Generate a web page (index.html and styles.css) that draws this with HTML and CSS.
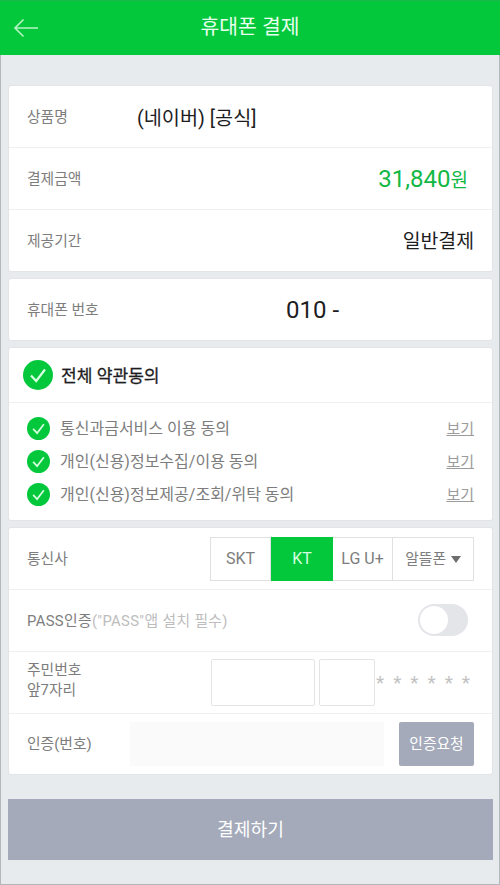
FILE: index.html
```html
<!DOCTYPE html>
<html lang="ko">
  <head>
    <meta charset="UTF-8">
    <meta name="viewport" content="width=device-width, initial-scale=1.0">
    <title>휴대폰 결제</title>
    <link rel="stylesheet" href="styles.css">
  </head>
  <body>
    <header class="header">
      <a href="#" class="back" aria-label="뒤로">
        <svg width="26" height="20" viewBox="0 0 26 20"><path d="M25 10H2M10.5 1.5L2 10l8.5 8.5"/></svg>
      </a>
      <h1>휴대폰 결제</h1>
    </header>

    <main class="content">
      <section class="card">
        <div class="row">
          <span class="label">상품명</span>
          <span class="product">(네이버) [공식]</span>
        </div>
        <div class="row">
          <span class="label">결제금액</span>
          <span class="price">31,840<small>원</small></span>
        </div>
        <div class="row">
          <span class="label">제공기간</span>
          <span class="period">일반결제</span>
        </div>
      </section>

      <section class="card">
        <div class="row">
          <span class="label">휴대폰 번호</span>
          <span class="phone">010 -</span>
        </div>
      </section>

      <section class="card">
        <div class="agree-all">
          <svg class="check" width="30" height="30" viewBox="0 0 30 30"><circle cx="15" cy="15" r="15"/><path d="M8 15.5l5.2 5.5L22 9.5"/></svg>
          <strong>전체 약관동의</strong>
        </div>
        <ul class="agree-list">
          <li>
            <svg class="check" width="23" height="23" viewBox="0 0 30 30"><circle cx="15" cy="15" r="15"/><path d="M8 15.5l5.2 5.5L22 9.5"/></svg>
            <span>통신과금서비스 이용 동의</span>
            <a href="#">보기</a>
          </li>
          <li>
            <svg class="check" width="23" height="23" viewBox="0 0 30 30"><circle cx="15" cy="15" r="15"/><path d="M8 15.5l5.2 5.5L22 9.5"/></svg>
            <span>개인(신용)정보수집/이용 동의</span>
            <a href="#">보기</a>
          </li>
          <li>
            <svg class="check" width="23" height="23" viewBox="0 0 30 30"><circle cx="15" cy="15" r="15"/><path d="M8 15.5l5.2 5.5L22 9.5"/></svg>
            <span>개인(신용)정보제공/조회/위탁 동의</span>
            <a href="#">보기</a>
          </li>
        </ul>
      </section>

      <section class="card">
        <div class="row">
          <span class="label">통신사</span>
          <div class="carriers">
            <button type="button">SKT</button>
            <button type="button" class="active">KT</button>
            <button type="button">LG U+</button>
            <button type="button" class="mvno">알뜰폰
              <svg width="10" height="7" viewBox="0 0 10 7"><path d="M0 0h10L5 7z"/></svg>
            </button>
          </div>
        </div>
        <div class="row">
          <span class="label pass">PASS인증<em>("PASS"앱 설치 필수)</em></span>
          <span class="toggle"></span>
        </div>
        <div class="row">
          <label class="label birth-label" for="birth">주민번호<br>앞7자리</label>
          <div class="resident">
            <input type="text" id="birth" class="birth">
            <input type="text" class="gender" aria-label="뒷자리">
            <span class="stars"><i>*</i><i>*</i><i>*</i><i>*</i><i>*</i><i>*</i></span>
          </div>
        </div>
        <div class="row">
          <label class="label" for="code">인증(번호)</label>
          <input type="text" id="code" class="code">
          <button type="button" class="request">인증요청</button>
        </div>
      </section>

      <button type="button" class="pay">결제하기</button>
    </main>
  </body>
</html>
```
FILE: styles.css
```css
* {
  box-sizing: border-box;
}

body {
  margin: 0;
  height: 885px;
  display: flex;
  flex-direction: column;
  background-color: #e8ebee;
  font-family: Roboto, "Noto Sans CJK KR", sans-serif;
  font-size: 14.8px;
  color: #1d1d1f;
}

button,
input {
  font: inherit;
  margin: 0;
  padding: 0;
  border: 0;
  border-radius: 0;
}

.header {
  position: relative;
  height: 55px;
  background-color: #03c83c;
  border-top: 1px solid #1bb94b;
}

.header h1 {
  margin: 0;
  color: #e9ffee;
  font-size: 20.4px;
  font-weight: 400;
  line-height: 52px;
  text-align: center;
}

.back {
  position: absolute;
  left: 13px;
  top: 17px;
}

.back svg {
  display: block;
  fill: none;
  stroke: #b5f5c2;
  stroke-width: 1.6;
}

.content {
  flex: 1;
  display: flex;
  flex-direction: column;
  gap: 8px;
  padding: 31px 7px 0 8px;
  border: 1px solid #b4b7bb;
  border-top: 0;
}

.card {
  background-color: #fff;
  border-radius: 2px;
  box-shadow: 0 0 1px 1px #e1e4e7;
}

.row {
  display: flex;
  align-items: center;
  justify-content: space-between;
  height: 62px;
  padding: 0 18px;
  border-top: 1px solid #eeeff0;
}

.row:first-child {
  height: 61px;
  border-top: 0;
}

.row:nth-child(4) {
  height: 61px;
}

.label {
  color: #7d7d7d;
  line-height: 20px;
}

.label em {
  color: #bdbdbd;
  font-style: normal;
}

.pass {
  letter-spacing: 0.35px;
}

.birth-label {
  padding-bottom: 5px;
}

.product {
  width: 337px;
  font-size: 19.7px;
}

.price {
  padding-right: 6px;
  color: #12b845;
  font-size: 24px;
}

.price small {
  font-size: 19px;
}

.period {
  padding-bottom: 2px;
  font-size: 19.4px;
}

.phone {
  width: 188px;
  font-size: 24px;
}

.check {
  flex: none;
  fill: #03c83c;
}

.check path {
  fill: none;
  stroke: #d8ffe0;
  stroke-width: 2.2;
}

.agree-all {
  display: flex;
  align-items: center;
  gap: 8px;
  height: 54px;
  padding-left: 14px;
}

.agree-all strong {
  padding-bottom: 2px;
  font-size: 17.1px;
  font-weight: 400;
  -webkit-text-stroke: 0.3px;
}

.agree-list {
  margin: 0;
  padding: 9px 18px 10px 18px;
  height: 118px;
  border-top: 1px solid #eeeff0;
  list-style: none;
}

.agree-list li {
  display: flex;
  align-items: center;
  gap: 10px;
  height: 33px;
  color: #7d7d7d;
  font-size: 16px;
}

.agree-list span,
.agree-list a {
  padding-bottom: 3px;
}

.agree-list a {
  margin-left: auto;
  color: #9b9b9b;
  font-size: 15px;
}

.carriers {
  display: grid;
  grid-template-columns: 60px 62px 60px 80px;
  height: 44px;
  border: 1px solid #dfe0e2;
  width: 264px;
}

.carriers button {
  background-color: #fff;
  border-right: 1px solid #dfe0e2;
  color: #7d7d7d;
  font-size: 16px;
}

.carriers button:last-child {
  border-right: 0;
}

.carriers .active {
  margin: -1px 0;
  background-color: #03c83c;
  border-right: 0;
  color: #d8ffe0;
}

.carriers .mvno {
  padding-bottom: 2px;
  font-size: 14.8px;
}

.mvno svg {
  fill: #6e6e6e;
  margin-left: 1px;
  vertical-align: 1px;
}

.toggle {
  width: 50px;
  height: 32px;
  margin-right: 6px;
  margin-bottom: 1px;
  padding: 2px;
  border-radius: 16px;
  background-color: #e4e5e9;
}

.toggle::before {
  content: "";
  display: block;
  width: 28px;
  height: 28px;
  border-radius: 50%;
  background-color: #fff;
}

.resident {
  display: flex;
  align-items: center;
  width: 263px;
}

.resident input {
  height: 47px;
  border: 1px solid #e3e4e6;
  border-radius: 2px;
}

.birth {
  width: 104px;
  margin-right: 4px;
}

.gender {
  width: 56px;
}

.stars {
  flex: 1;
  display: flex;
  justify-content: space-between;
  padding: 0 4px 0 1px;
  color: #c2c2c2;
  font-size: 19px;
}

.stars i {
  font-style: normal;
}

.code {
  width: 254px;
  height: 44px;
  margin-left: auto;
  background-color: #fafafa;
}

.request {
  width: 75px;
  height: 44px;
  margin-left: 15px;
  padding-bottom: 3px;
  border-radius: 2px;
  background-color: #a4aab9;
  color: #fff;
}

.pay {
  height: 61px;
  margin: 17px -1px 0 -1px;
  padding-bottom: 4px;
  background-color: #a4aab9;
  color: #fff;
  font-size: 18.2px;
}
```
